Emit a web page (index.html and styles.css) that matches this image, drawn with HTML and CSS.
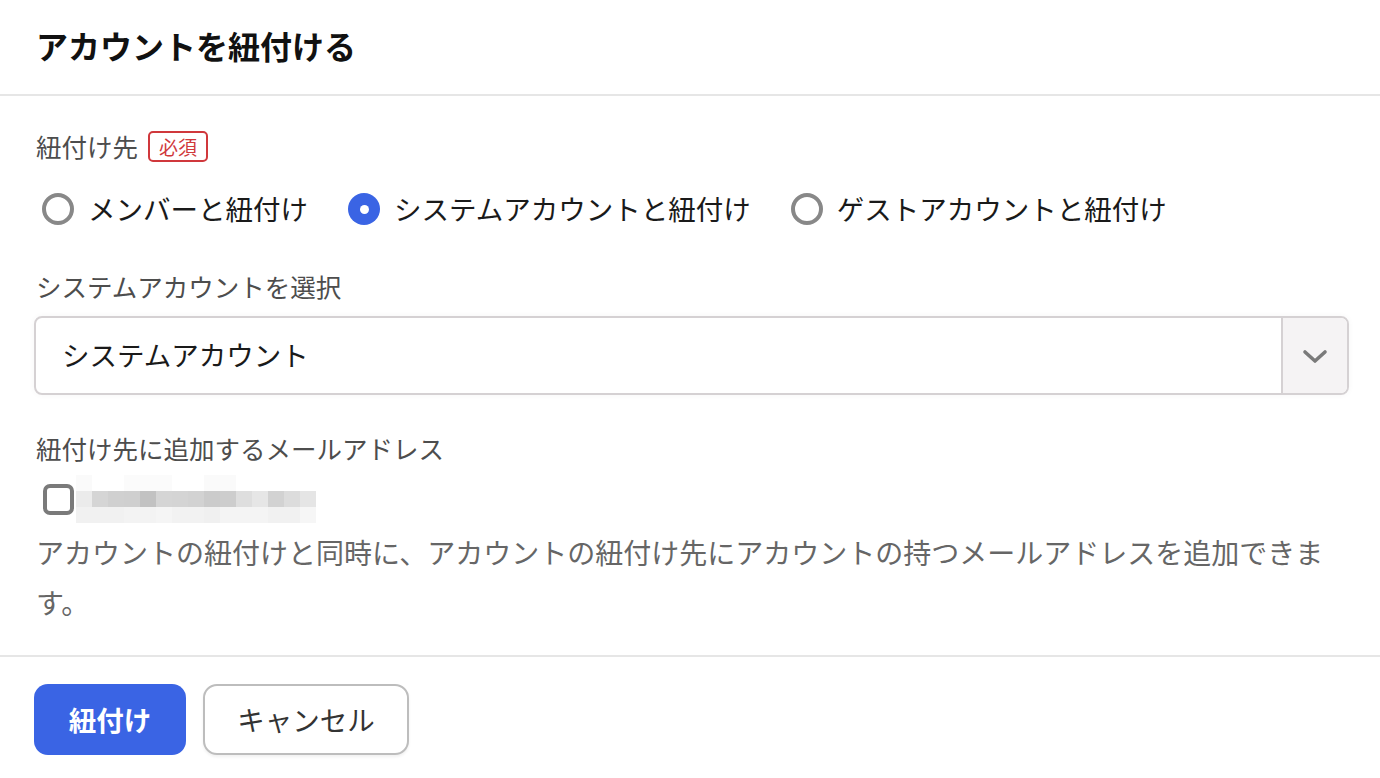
FILE: index.html
```html
<!DOCTYPE html>
<html lang="ja">
<head>
<meta charset="utf-8">
<title>アカウントを紐付ける</title>
<link rel="stylesheet" href="styles.css">
</head>
<body>
<div class="dialog">
  <header class="dialog-header">
    <h1 class="dialog-title">アカウントを紐付ける</h1>
  </header>
  <main class="dialog-body">
    <div class="field-label">
      <span>紐付け先</span>
      <span class="badge">必須</span>
    </div>
    <div class="radio-group">
      <label class="radio">
        <span class="radio-mark"></span>
        <span class="radio-text">メンバーと紐付け</span>
      </label>
      <label class="radio">
        <span class="radio-mark checked"></span>
        <span class="radio-text">システムアカウントと紐付け</span>
      </label>
      <label class="radio">
        <span class="radio-mark"></span>
        <span class="radio-text">ゲストアカウントと紐付け</span>
      </label>
    </div>

    <div class="field-label label-select">システムアカウントを選択</div>
    <div class="select">
      <div class="select-value">システムアカウント</div>
      <div class="select-arrow">
        <svg width="26" height="16" viewBox="0 0 26 16"><path d="M3 3 L13 12 L23 3" fill="none" stroke="#7a7a7a" stroke-width="3.6" stroke-linecap="round" stroke-linejoin="round"/></svg>
      </div>
    </div>

    <div class="field-label label-mail">紐付け先に追加するメールアドレス</div>
    <div class="checkbox-row">
      <span class="checkbox"></span>
      <span class="mosaic" aria-label="メールアドレス">
        <span class="mosaic-row r1"></span>
        <span class="mosaic-row r2"></span>
        <span class="mosaic-row r3"></span>
      </span>
    </div>
    <p class="help">アカウントの紐付けと同時に、アカウントの紐付け先にアカウントの持つメールアドレスを追加できます。</p>
  </main>
  <footer class="dialog-footer">
    <button class="btn btn-primary">紐付け</button>
    <button class="btn btn-secondary">キャンセル</button>
  </footer>
</div>
</body>
</html>
```

FILE: styles.css
```css
* { box-sizing: border-box; }
html, body { margin: 0; padding: 0; background: #fff; }
body {
  font-family: "Noto Sans CJK JP", "Noto Sans", sans-serif;
  color: #222;
  width: 1380px;
  height: 778px;
  overflow: hidden;
}
.dialog { display: flex; flex-direction: column; }
.dialog-header {
  height: 96px;
  border-bottom: 2px solid #e6e6e6;
  display: flex;
  align-items: center;
  padding: 0 36px 4px;
}
.dialog-title {
  margin: 0;
  font-size: 32px;
  font-weight: 700;
  color: #111;
  line-height: 40px;
}
.dialog-body {
  padding: 34px 36px 28px;
  display: flex;
  flex-direction: column;
}
.field-label {
  font-size: 25.5px;
  line-height: 32px;
  height: 32px;
  color: #4d4d4d;
  display: flex;
  align-items: center;
  gap: 10px;
}
.badge {
  font-size: 19px;
  line-height: 27px;
  height: 31px;
  padding: 0 9px;
  border: 2px solid #d0383c;
  border-radius: 5px;
  color: #d0383c;
  display: inline-flex;
  align-items: center;
}
.radio-group {
  margin-top: 27px;
  height: 40px;
  display: flex;
  align-items: center;
  gap: 40px;
  padding-left: 6px;
}
.radio { display: flex; align-items: center; gap: 14px; }
.radio-mark {
  width: 32px;
  height: 32px;
  border-radius: 50%;
  border: 4px solid #888;
  display: inline-flex;
  align-items: center;
  justify-content: center;
}
.radio-mark.checked {
  border: none;
  background: #3a64e4;
}
.radio-mark.checked::after {
  content: "";
  width: 9px;
  height: 9px;
  border-radius: 50%;
  background: #fff;
}
.radio-text {
  font-size: 27.5px;
  line-height: 40px;
  color: #1a1a1a;
  margin-top: -2px;
}
.label-select { margin-top: 41px; }
.select {
  margin-top: 14px;
  margin-left: -2px;
  margin-right: -5px;
  height: 79px;
  border: 2px solid #d5d1d3;
  border-radius: 8px;
  display: flex;
  box-shadow: 0 0 6px rgba(0,0,0,0.04);
  overflow: hidden;
}
.select-value {
  flex: 1;
  display: flex;
  align-items: center;
  padding-left: 26px;
  padding-bottom: 4px;
  font-size: 27.5px;
  color: #1a1a1a;
}
.select-arrow {
  width: 66px;
  border-left: 2px solid #d5d1d3;
  background: #f5f3f4;
  display: flex;
  align-items: center;
  justify-content: center;
  padding-top: 2px;
}
.label-mail { margin-top: 37px; }
.checkbox-row {
  margin-top: 11px;
  height: 48px;
  display: flex;
  align-items: center;
  padding-left: 7px;
}
.checkbox {
  width: 31px;
  height: 31px;
  border: 4px solid #7a7a7a;
  border-radius: 7px;
  flex-shrink: 0;
}
.mosaic {
  display: flex;
  flex-direction: column;
  margin-left: 2px;
  width: 240px;
}
.mosaic-row { height: 16px; display: block; }
.mosaic-row.r1 {
  background: linear-gradient(90deg,
    #fafafa 0 16px, #ffffff 16px 48px, #fbfbfb 48px 96px, #ffffff 96px 128px,
    #fafafa 128px 160px, #ffffff 160px 240px);
}
.mosaic-row.r2 {
  background: linear-gradient(90deg,
    #ebebeb 0 16px, #d5d5d5 16px 32px, #d0d0d0 32px 48px, #cfcfcf 48px 64px,
    #c2c2c2 64px 80px, #d5d5d5 80px 96px, #d4d4d4 96px 112px, #d2d2d2 112px 128px,
    #cbcbcb 128px 144px, #cdcdcd 144px 160px, #dedede 160px 176px, #e6e6e6 176px 192px,
    #d2d2d2 192px 208px, #dcdcdc 208px 224px, #e5e5e5 224px 240px);
}
.mosaic-row.r3 {
  background: linear-gradient(90deg,
    #f1f1f1 0 48px, #f3f3f3 48px 80px, #f5f5f5 80px 96px, #f2f2f2 96px 128px,
    #f0f0f0 128px 144px, #f4f4f4 144px 192px, #f1f1f1 192px 224px, #f6f6f6 224px 240px);
}
.help {
  margin: 4px 0 0;
  font-size: 28px;
  line-height: 50px;
  color: #666;
}
.dialog-footer {
  border-top: 2px solid #e6e6e6;
  padding: 27px 34px;
  display: flex;
  gap: 17px;
}
.btn {
  height: 71px;
  border-radius: 14px;
  font-family: "Noto Sans CJK JP", "Noto Sans", sans-serif;
  font-size: 27.5px;
  cursor: pointer;
  padding-bottom: 2px;
}
.btn-primary {
  width: 152px;
  background: #3a64e4;
  color: #fff;
  border: none;
  font-weight: 700;
}
.btn-secondary {
  width: 206px;
  background: #fff;
  color: #333;
  border: 2px solid #bdbdbd;
  box-shadow: 0 2px 3px rgba(0,0,0,0.06);
}
```
